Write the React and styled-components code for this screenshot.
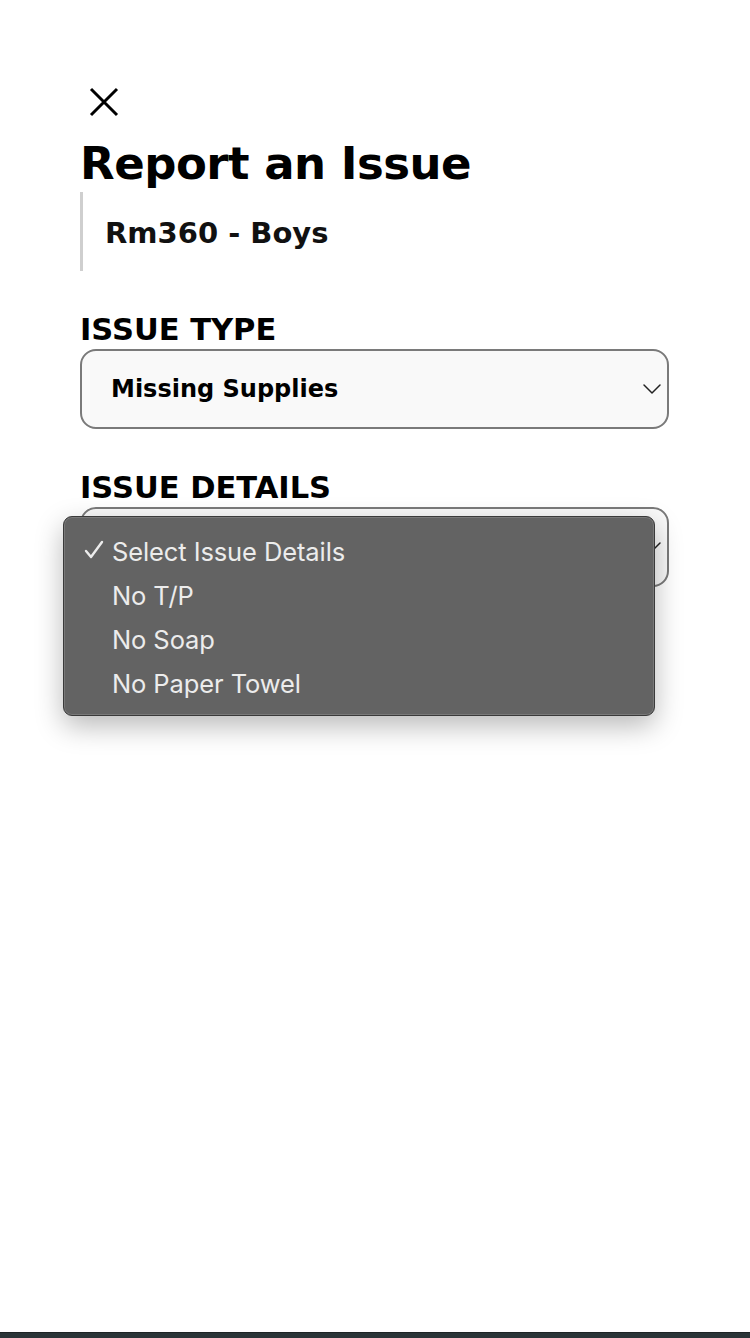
import styled, { createGlobalStyle } from 'styled-components';

const GlobalStyle = createGlobalStyle`
  * {
    margin: 0;
    padding: 0;
    box-sizing: border-box;
  }
  body {
    background: #fff;
    font-family: 'DejaVu Sans', sans-serif;
  }
`;

const Page = styled.div`
  position: relative;
  width: 750px;
  height: 1338px;
  display: flex;
  flex-direction: column;
`;

const Main = styled.main`
  flex: 1;
  padding: 86px 81px 0 80px;
  display: flex;
  flex-direction: column;
`;

const CloseBtn = styled.button`
  width: 32px;
  height: 32px;
  border: none;
  background: none;
  margin-left: 8px;
  display: flex;
  align-items: center;
  justify-content: center;
  cursor: pointer;
`;

const Title = styled.h1`
  font-family: 'DejaVu Sans', sans-serif;
  font-weight: 700;
  font-size: 45px;
  line-height: 54px;
  color: #000;
  margin-top: 19px;
  letter-spacing: -0.5px;
`;

const Location = styled.div`
  border-left: 3px solid #cfcfcf;
  padding: 22px 0 19px 22px;
  margin-top: 1px;
  font-family: 'DejaVu Sans', sans-serif;
  font-weight: 600;
  font-size: 29px;
  line-height: 38px;
  color: #111;
`;

const Field = styled.div`
  position: relative;
  display: flex;
  flex-direction: column;
  margin-top: ${(p) => p.$top}px;
`;

const Label = styled.label`
  font-family: 'DejaVu Sans', sans-serif;
  font-weight: 700;
  font-size: 30.5px;
  line-height: 36px;
  color: #000;
  letter-spacing: 0;
`;

const SelectBox = styled.div`
  height: 80px;
  margin-top: 1px;
  border: 2px solid #7a7a7a;
  border-radius: 16px;
  background: #f9f9f9;
  display: flex;
  align-items: center;
  justify-content: space-between;
  padding: 0 5px 0 29px;
  font-family: 'DejaVu Sans', sans-serif;
  font-weight: 600;
  font-size: 24px;
  color: #000;
`;

const Menu = styled.ul`
  position: absolute;
  left: -17px;
  top: 46px;
  width: 592px;
  list-style: none;
  background: #636363;
  border: 1px solid #3a3a3a;
  border-radius: 9px;
  padding: 12px 0 10px;
  box-shadow: 0 10px 28px rgba(0, 0, 0, 0.28), inset 0 0 0 1px rgba(255, 255, 255, 0.14);
`;

const MenuItem = styled.li`
  display: flex;
  align-items: center;
  height: 44px;
  padding-left: 48px;
  position: relative;
  font-family: 'Inter', 'Roboto', sans-serif;
  font-size: 25.5px;
  color: #ececec;
  letter-spacing: -0.1px;
`;

const Check = styled.span`
  position: absolute;
  left: 19px;
  top: 7px;
  width: 22px;
  height: 22px;
`;

const Footer = styled.div`
  height: 6px;
  background: #2b3538;
  border-top: 1px solid #1e2426;
`;

const Chevron = () => (
  <svg width="20" height="12" viewBox="0 0 20 12" fill="none">
    <path d="M2 2l8 8 8-8" stroke="#222" strokeWidth="1.5" strokeLinecap="round" strokeLinejoin="round" />
  </svg>
);

const details = ['No T/P', 'No Soap', 'No Paper Towel'];

export default function App() {
  return (
    <>
      <GlobalStyle />
      <Page>
        <Main>
          <CloseBtn aria-label='close'>
            <svg width="32" height="32" viewBox="0 0 32 32">
              <path d="M3 3l26 26M29 3L3 29" stroke="#000" strokeWidth="3" />
            </svg>
          </CloseBtn>
          <Title>Report an Issue</Title>
          <Location>Rm360 - Boys</Location>
          <Field $top={41}>
            <Label>ISSUE TYPE</Label>
            <SelectBox>
              Missing Supplies
              <Chevron />
            </SelectBox>
          </Field>
          <Field $top={41}>
            <Label>ISSUE DETAILS</Label>
            <SelectBox>
              <span />
              <Chevron />
            </SelectBox>
            <Menu>
              <MenuItem>
                <Check>
                  <svg width="22" height="22" viewBox="0 0 22 22" fill="none">
                    <path d="M3 12l5 6L19 3" stroke="#ececec" strokeWidth="2.4" strokeLinecap="round" strokeLinejoin="round" />
                  </svg>
                </Check>
                Select Issue Details
              </MenuItem>
              {details.map((d) => (
                <MenuItem key={d}>{d}</MenuItem>
              ))}
            </Menu>
          </Field>
        </Main>
        <Footer />
      </Page>
    </>
  );
}
